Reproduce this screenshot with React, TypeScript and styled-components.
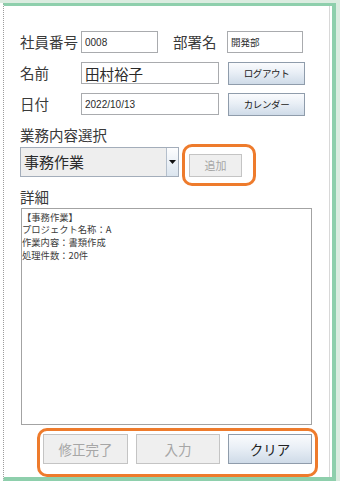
import React from "react";
import styled, { createGlobalStyle } from "styled-components";

const GlobalStyle = createGlobalStyle`
  html, body { margin: 0; padding: 0; background: #ffffff; }
  body { font-family: "Noto Sans CJK JP", "Noto Sans", sans-serif; color: #3a3a3a; }
  * { box-sizing: border-box; }
`;

const GREEN = "#8ecfac";
const PALE = "#dbece0";
const ORANGE = "#ee7b2c";

const Frame = styled.div`
  width: 340px;
  height: 485px;
  border-top: 3px solid ${PALE};
  display: flex;
  align-items: flex-start;
`;

const Panel = styled.div`
  margin-left: 3px;
  width: 333px;
  height: 478px;
  border-left: 1px dotted #9c9c9c;
  border-top: 3px solid ${GREEN};
  border-right: 4px solid ${GREEN};
  border-bottom: 4px solid ${GREEN};
  box-shadow: inset -2px 0 0 #ffffff, inset -3px 0 0 #d8d8d8, 4px 0 0 ${PALE};
  padding: 25px 0 0 16px;
  display: flex;
  flex-direction: column;
  align-items: flex-start;
  background: #fff;
`;

const FormRow = styled.div<{ $mt?: number }>`
  display: flex;
  align-items: center;
  height: 23px;
  margin-top: ${(p) => p.$mt ?? 0}px;
`;

const FieldLabel = styled.span<{ $w: number; $ml?: number }>`
  width: ${(p) => p.$w}px;
  margin-left: ${(p) => p.$ml ?? 0}px;
  font-size: 14.5px;
  line-height: 18px;
  color: #3a3a3a;
  white-space: nowrap;
`;

const TextBox = styled.div<{ $w: number; $size: number; $latin?: boolean }>`
  width: ${(p) => p.$w}px;
  height: 22px;
  border: 1px solid #a9abae;
  background: #fff;
  display: flex;
  align-items: center;
  padding-left: 3px;
  font-family: ${(p) =>
    p.$latin
      ? `"Liberation Sans", "Noto Sans CJK JP", sans-serif`
      : `"Noto Sans CJK JP", sans-serif`};
  font-size: ${(p) => p.$size}px;
  color: #2a2a2a;
  white-space: nowrap;
`;

const Button = styled.div<{ $w: number; $h: number; $size: number; $disabled?: boolean; $ml?: number }>`
  width: ${(p) => p.$w}px;
  height: ${(p) => p.$h}px;
  margin-left: ${(p) => p.$ml ?? 0}px;
  display: flex;
  align-items: center;
  justify-content: center;
  font-size: ${(p) => p.$size}px;
  letter-spacing: ${(p) => (p.$size < 11 ? "-0.4px" : "0")};
  white-space: nowrap;
  border: 1px solid ${(p) => (p.$disabled ? "#c4c4c4" : "#8f9cab")};
  color: ${(p) => (p.$disabled ? "#a6a6a6" : "#222")};
  background: ${(p) =>
    p.$disabled ? "#efefef" : "linear-gradient(#fafbfd 0%, #e9eff6 45%, #cfdbe8 100%)"};
`;

const SectionLabel = styled.div<{ $mt: number }>`
  margin-top: ${(p) => p.$mt}px;
  font-size: 14.5px;
  line-height: 18px;
  color: #3a3a3a;
`;

const ComboRow = styled.div`
  display: flex;
  align-items: flex-start;
`;

const Combo = styled.div`
  margin-top: 3px;
  width: 159px;
  height: 30px;
  border: 1px solid #a3adba;
  background: #eeeeee;
  display: flex;
`;

const ComboText = styled.div`
  flex: 1;
  display: flex;
  align-items: center;
  padding-left: 3px;
  font-size: 15px;
  color: #2a2a2a;
`;

const ComboArrow = styled.div`
  width: 12px;
  border-left: 1px solid #b4bfcc;
  background: linear-gradient(#fdfdfe, #dbe5ef);
  display: flex;
  align-items: center;
  justify-content: center;
`;

const Highlight = styled.div<{ $w: number; $h: number; $ml: number; $pad: string }>`
  width: ${(p) => p.$w}px;
  height: ${(p) => p.$h}px;
  margin-left: ${(p) => p.$ml}px;
  border: 3px solid ${ORANGE};
  border-radius: 10px;
  padding: ${(p) => p.$pad};
  background: #fff;
  display: flex;
  align-items: flex-start;
`;

const DetailBox = styled.div`
  margin-top: 2px;
  margin-left: 1px;
  width: 291px;
  height: 221px;
  border: 1px solid #a3a3a3;
  background: #fff;
  padding: 2px 0 0 0;
  font-size: 9.3px;
  line-height: 12.7px;
  color: #3c3c3c;
  white-space: pre-line;
`;

const BottomHighlight = styled(Highlight)`
  margin-top: 3px;
  justify-content: space-between;
`;

export default function App() {
  return (
    <>
      <GlobalStyle />
      <Frame>
        <Panel>
          <FormRow>
            <FieldLabel $w={61}>社員番号</FieldLabel>
            <TextBox $w={77} $size={10} $latin>0008</TextBox>
            <FieldLabel $w={54} $ml={15}>部署名</FieldLabel>
            <TextBox $w={76} $size={9.5}>開発部</TextBox>
          </FormRow>
          <FormRow $mt={8}>
            <FieldLabel $w={61}>名前</FieldLabel>
            <TextBox $w={138} $size={14.5}>田村裕子</TextBox>
            <Button $w={77} $h={23} $size={9.5} $ml={9}>ログアウト</Button>
          </FormRow>
          <FormRow $mt={8}>
            <FieldLabel $w={61}>日付</FieldLabel>
            <TextBox $w={138} $size={10} $latin>2022/10/13</TextBox>
            <Button $w={77} $h={23} $size={9.5} $ml={9}>カレンダー</Button>
          </FormRow>
          <SectionLabel $mt={10}>業務内容選択</SectionLabel>
          <ComboRow>
            <Combo>
              <ComboText>事務作業</ComboText>
              <ComboArrow>
                <svg width="7" height="4" viewBox="0 0 7 4">
                  <path d="M0 0 H7 L3.5 4 Z" fill="#111" />
                </svg>
              </ComboArrow>
            </Combo>
            <Highlight $w={74} $h={42} $ml={3} $pad="7px 0 0 4px">
              <Button $w={53} $h={23} $size={11} $disabled>追加</Button>
            </Highlight>
          </ComboRow>
          <SectionLabel $mt={2}>詳細</SectionLabel>
          <DetailBox>
            {"【事務作業】\nプロジェクト名称：A\n作業内容：書類作成\n処理件数：20件"}
          </DetailBox>
          <BottomHighlight $w={281} $h={50} $ml={17} $pad="3px 3px 0 3px">
            <Button $w={85} $h={30} $size={13.5} $disabled>修正完了</Button>
            <Button $w={84} $h={30} $size={13.5} $disabled>入力</Button>
            <Button $w={84} $h={30} $size={13.5}>クリア</Button>
          </BottomHighlight>
        </Panel>
      </Frame>
    </>
  );
}
